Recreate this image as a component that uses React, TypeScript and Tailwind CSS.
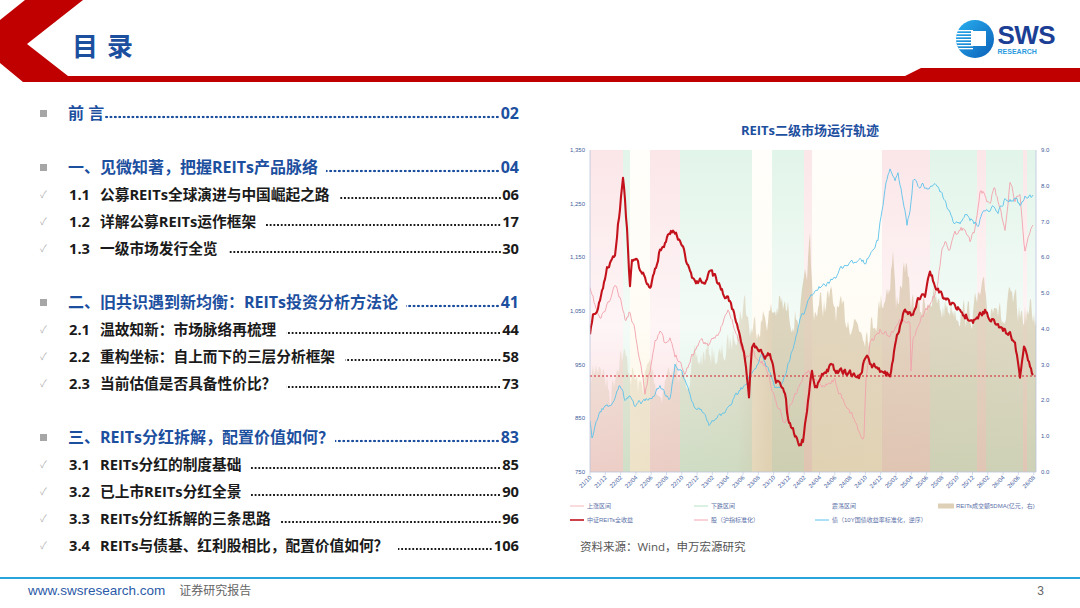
import React from "react";

type Pt = [number, number];

function rng(seed: number) {
  let s = seed;
  return () => {
    s = (s * 16807) % 2147483647;
    return s / 2147483647;
  };
}

// interpolate key points and add a little smoothed noise so lines look like market data
function jag(pts: Pt[], amp: number, seed: number, step = 1) {
  const r = rng(seed);
  const out: string[] = [];
  let n0 = 0;
  for (let i = 0; i < pts.length - 1; i++) {
    const [x0, y0] = pts[i];
    const [x1, y1] = pts[i + 1];
    const n = Math.max(1, Math.round((x1 - x0) / step));
    for (let k = 0; k < n; k++) {
      const t = k / n;
      n0 = n0 * 0.45 + (r() - 0.5) * amp;
      const x = x0 + (x1 - x0) * t;
      const y = y0 + (y1 - y0) * t + n0;
      out.push(`${x.toFixed(1)},${y.toFixed(1)}`);
    }
  }
  const last = pts[pts.length - 1];
  out.push(`${last[0]},${last[1]}`);
  return out.join(" ");
}

const reits: Pt[] = [
  [590, 337], [593, 312], [597, 308], [603, 290], [607, 268], [612, 262], [615, 255], [618, 225],
  [620, 210], [623, 175], [625, 200], [627, 230], [630, 287], [632, 260], [636, 255], [640, 270],
  [645, 275], [650, 290], [654, 275], [660, 250], [665, 245], [670, 232], [675, 232], [680, 240],
  [685, 255], [690, 275], [695, 282], [700, 280], [705, 283], [710, 270], [715, 277], [720, 288],
  [725, 295], [730, 303], [736, 320], [740, 340], [745, 360], [749, 395], [752, 345], [757, 346],
  [765, 355], [770, 355], [776, 380], [785, 390], [788, 420], [795, 434], [798, 445], [803, 440],
  [808, 400], [812, 368], [815, 390], [822, 375], [830, 367], [840, 372], [850, 373], [860, 376],
  [866, 355], [872, 365], [880, 370], [890, 376], [895, 345], [905, 308], [912, 315], [918, 300],
  [925, 295], [930, 272], [935, 285], [945, 300], [955, 305], [965, 315], [975, 322], [985, 310],
  [995, 325], [1003, 330], [1010, 335], [1015, 345], [1020, 375], [1024, 348], [1028, 362], [1033, 375],
];

const stock: Pt[] = [
  [590, 290], [600, 320], [610, 300], [615, 285], [622, 305], [625, 320], [630, 312], [635, 330],
  [640, 360], [645, 392], [650, 370], [655, 340], [660, 330], [665, 345], [670, 340], [675, 355],
  [680, 360], [685, 375], [690, 360], [695, 350], [700, 340], [710, 345], [720, 330], [728, 310],
  [735, 330], [745, 360], [752, 350], [758, 360], [765, 365], [770, 380], [775, 400], [780, 410],
  [785, 425], [790, 405], [800, 385], [806, 370], [812, 375], [820, 385], [835, 380], [842, 400],
  [848, 410], [855, 420], [862, 440], [864, 435], [866, 380], [870, 345], [880, 330], [890, 335],
  [900, 320], [910, 322], [911, 372], [913, 340], [920, 320], [930, 305], [937, 290], [942, 250],
  [945, 240], [950, 250], [955, 235], [960, 230], [965, 228], [970, 240], [975, 230], [980, 190],
  [985, 195], [990, 205], [994, 185], [1000, 210], [1005, 230], [1010, 182], [1015, 200], [1020, 195],
  [1025, 252], [1028, 240], [1033, 225],
];

const bond: Pt[] = [
  [590, 423], [592, 440], [600, 410], [610, 405], [615, 400], [620, 385], [625, 400], [630, 395],
  [635, 405], [645, 400], [655, 395], [660, 385], [665, 395], [670, 400], [675, 363], [680, 370],
  [685, 380], [690, 395], [695, 410], [700, 408], [705, 415], [710, 425], [720, 415], [730, 405],
  [735, 395], [745, 385], [752, 370], [757, 365], [762, 355], [770, 375], [775, 385], [780, 385],
  [785, 375], [795, 340], [800, 320], [805, 310], [810, 298], [820, 287], [830, 282], [838, 273],
  [845, 265], [855, 262], [860, 255], [865, 263], [872, 252], [878, 240], [882, 210], [885, 190],
  [887, 180], [890, 172], [895, 180], [898, 175], [902, 195], [905, 212], [907, 225], [910, 210],
  [913, 180], [918, 185], [923, 185], [928, 188], [935, 182], [940, 190], [945, 200], [950, 215],
  [955, 225], [960, 222], [965, 215], [970, 220], [978, 225], [985, 210], [993, 207], [998, 212],
  [1005, 200], [1010, 200], [1016, 198], [1020, 205], [1025, 198], [1033, 195],
];

const volume: Pt[] = [
  [590, 380], [600, 360], [610, 395], [620, 350], [630, 370], [640, 390], [650, 365], [660, 395],
  [670, 370], [680, 380], [690, 370], [700, 360], [710, 350], [720, 360], [730, 345], [740, 315],
  [745, 300], [750, 330], [760, 320], [770, 315], [780, 305], [790, 315], [800, 315], [805, 290],
  [810, 245], [813, 310], [820, 305], [830, 300], [840, 315], [850, 318], [860, 325], [870, 330],
  [880, 305], [890, 280], [893, 250], [896, 310], [900, 285], [905, 265], [910, 300], [920, 310],
  [930, 295], [940, 310], [950, 305], [960, 310], [970, 315], [980, 300], [985, 295], [990, 315],
  [995, 290], [1000, 315], [1005, 325], [1010, 300], [1020, 315], [1030, 312], [1036, 320],
];

// shaded regimes: p = 上涨, g = 下跌, c = 震荡
const bands: [number, number, string][] = [
  [590, 623, "p"], [623, 630, "g"], [630, 650, "c"], [650, 680, "p"], [680, 752, "g"],
  [752, 772, "c"], [772, 804, "g"], [804, 812, "p"], [812, 882, "c"], [882, 930, "p"],
  [930, 977, "g"], [977, 986, "p"], [986, 1023, "g"], [1023, 1027, "p"], [1027, 1036, "g"],
];

const xLabels = [
  "21/10", "21/12", "22/02", "22/04", "22/06", "22/08", "22/10", "22/12", "23/02", "23/04",
  "23/06", "23/08", "23/10", "23/12", "24/02", "24/04", "24/06", "24/08", "24/10", "24/12",
  "25/02", "25/04", "25/06", "25/08", "25/10", "25/12", "26/02", "26/04", "26/06", "26/08",
];

const leftAxis = ["1,350", "1,250", "1,150", "1,050", "950", "850", "750"];
const rightAxis = ["9.0", "8.0", "7.0", "6.0", "5.0", "4.0", "3.0", "2.0", "1.0", "0.0"];

const volumePts = `${jag(volume, 26, 7, 1)} 1036,472 590,472`;
const stockPts = jag(stock, 5, 11);
const bondPts = jag(bond, 4.5, 23);
const reitsPts = jag(reits, 5.5, 41);

function Chart() {
  const svgFont = "Liberation Sans, Noto Sans CJK SC, sans-serif";
  return (
    <svg width={500} height={391} viewBox="550 139 500 391" fontFamily={svgFont}>
      <defs>
        <linearGradient id="gp" x1="0" y1="0" x2="0" y2="1">
          <stop offset="0" stopColor="#fbe6e8" />
          <stop offset="0.55" stopColor="#fef5f6" />
          <stop offset="1" stopColor="#f9d7db" />
        </linearGradient>
        <linearGradient id="gg" x1="0" y1="0" x2="0" y2="1">
          <stop offset="0" stopColor="#e2f5ea" />
          <stop offset="0.55" stopColor="#f4fbf7" />
          <stop offset="1" stopColor="#d2efdd" />
        </linearGradient>
        <linearGradient id="gc" x1="0" y1="0" x2="0" y2="1">
          <stop offset="0" stopColor="#fffefa" />
          <stop offset="0.55" stopColor="#fffcf5" />
          <stop offset="1" stopColor="#fcf4de" />
        </linearGradient>
        <linearGradient id="gv" gradientUnits="userSpaceOnUse" x1="590" y1="0" x2="1036" y2="0">
          <stop offset="0" stopColor="#c9b48e" stopOpacity={0.25} />
          <stop offset="0.33" stopColor="#c9b48e" stopOpacity={0.35} />
          <stop offset="0.4" stopColor="#c9b48e" stopOpacity={0.55} />
          <stop offset="1" stopColor="#c9b48e" stopOpacity={0.5} />
        </linearGradient>
        <clipPath id="plot">
          <rect x={590} y={150} width={446} height={322} />
        </clipPath>
      </defs>

      {bands.map(([a, b, k]) => (
        <rect key={a} x={a} y={150} width={b - a} height={322} fill={`url(#g${k})`} />
      ))}

      <g clipPath="url(#plot)">
        <polygon points={volumePts} fill="url(#gv)" />
        <polyline points={stockPts} fill="none" stroke="#f2a2ab" strokeWidth={0.9} />
        <polyline points={bondPts} fill="none" stroke="#5cc2ea" strokeWidth={0.9} />
        <polyline points={reitsPts} fill="none" stroke="#c3121c" strokeWidth={2.1} strokeLinejoin="round" />
      </g>

      <line x1={590} y1={376} x2={1036} y2={376} stroke="#d0202a" strokeWidth={1} strokeDasharray="2 2" />

      <line x1={590} y1={150} x2={590} y2={472} stroke="#b8c4dc" strokeWidth={0.8} />
      <line x1={1036} y1={150} x2={1036} y2={472} stroke="#b8c4dc" strokeWidth={0.8} />
      <line x1={590} y1={472} x2={1036} y2={472} stroke="#b8c4dc" strokeWidth={0.8} />

      {leftAxis.map((l, i) => (
        <text key={l} x={585} y={150 + i * 53.67 + 2} fontSize={6} fill="#3f5c9c" textAnchor="end">
          {l}
        </text>
      ))}
      {rightAxis.map((l, i) => (
        <text key={l} x={1041} y={150 + i * 35.78 + 2} fontSize={6} fill="#3f5c9c">
          {l}
        </text>
      ))}
      {xLabels.map((l, i) => {
        const x = 592 + i * 15.3;
        return (
          <g key={l}>
            <line x1={x - 2} y1={472} x2={x - 2} y2={475} stroke="#b8c4dc" strokeWidth={0.6} />
            <text x={x} y={478} fontSize={6} fill="#3f5c9c" textAnchor="end" transform={`rotate(-45 ${x} 478)`}>
              {l}
            </text>
          </g>
        );
      })}

      <g fontSize={6} fill="#5b70a8">
        <line x1={570} y1={506} x2={584} y2={506} stroke="#f5b9bf" strokeWidth={1} />
        <text x={587} y={508}>上涨区间</text>
        <line x1={694} y1={506} x2={708} y2={506} stroke="#b3e4c8" strokeWidth={1} />
        <text x={711} y={508}>下跌区间</text>
        <text x={832} y={508}>震荡区间</text>
        <rect x={938} y={503.5} width={16} height={5} fill="#ddd0b6" />
        <text x={956} y={508}>REITs成交额5DMA(亿元，右)</text>

        <line x1={570} y1={520} x2={584} y2={520} stroke="#c3121c" strokeWidth={1.6} />
        <text x={587} y={522}>中证REITs全收益</text>
        <line x1={694} y1={520} x2={708} y2={520} stroke="#f2a6ae" strokeWidth={1} />
        <text x={711} y={522}>股（沪指标准化）</text>
        <line x1={815} y1={520} x2={829} y2={520} stroke="#5cc2ea" strokeWidth={1} />
        <text x={832} y={522}>债（10Y国债收益率标准化，逆序）</text>
      </g>
    </svg>
  );
}

function Logo() {
  return (
    <div className="flex items-center gap-[3px] pt-[19px] pr-[25px]">
      <svg width={40} height={40} viewBox="0 0 40 40">
        <defs>
          <linearGradient id="lg" x1="0" y1="0" x2="1" y2="1">
            <stop offset="0" stopColor="#29b0ef" />
            <stop offset="1" stopColor="#0b5fb8" />
          </linearGradient>
          <clipPath id="lc">
            <circle cx={20} cy={20} r={19} />
          </clipPath>
        </defs>
        <circle cx={20} cy={20} r={19} fill="url(#lg)" />
        <g clipPath="url(#lc)" fill="#ffffff">
          {[11, 14, 17, 20, 23, 26, 29].map((y) => (
            <rect key={y} x={0} y={y} width={18} height={1.3} />
          ))}
        </g>
        <rect x={16} y={12} width={15} height={15} fill="#ffffff" />
      </svg>
      <div className="flex flex-col font-['Liberation_Sans',sans-serif] font-bold">
        <span className="text-[26px] leading-[25px] tracking-[-0.6px] text-[#1c3f95]">SWS</span>
        <span className="text-[7px] leading-[8px] text-[#2b9be0]">RESEARCH</span>
      </div>
    </div>
  );
}

type Sub = [string, string, string];
type Section = { title: string; page: string; gap: boolean; subs: Sub[] };

const sections: Section[] = [
  { title: "前 言", page: "02", gap: false, subs: [] },
  {
    title: "一、见微知著，把握REITs产品脉络",
    page: "04",
    gap: true,
    subs: [
      ["1.1", "公募REITs全球演进与中国崛起之路", "06"],
      ["1.2", "详解公募REITs运作框架", "17"],
      ["1.3", "一级市场发行全览", "30"],
    ],
  },
  {
    title: "二、旧共识遇到新均衡：REITs投资分析方法论",
    page: "41",
    gap: true,
    subs: [
      ["2.1", "温故知新：市场脉络再梳理", "44"],
      ["2.2", "重构坐标：自上而下的三层分析框架", "58"],
      ["2.3", "当前估值是否具备性价比？", "73"],
    ],
  },
  {
    title: "三、REITs分红拆解，配置价值如何？",
    page: "83",
    gap: false,
    subs: [
      ["3.1", "REITs分红的制度基础", "85"],
      ["3.2", "已上市REITs分红全景", "90"],
      ["3.3", "REITs分红拆解的三条思路", "96"],
      ["3.4", "REITs与债基、红利股相比，配置价值如何？", "106"],
    ],
  },
];

function Toc() {
  return (
    <div className="flex w-[540px] flex-col gap-[26px] pl-[40px] pr-[21px] pt-[17px]">
      {sections.map((s) => (
        <div key={s.page} className="flex flex-col">
          <div className="flex h-[28px] items-center text-[16px] font-bold text-[#1d4f9f]">
            <span className="mr-[21px] h-[7px] w-[7px] shrink-0 bg-[#a6a6a6]" />
            <span className="whitespace-nowrap">{s.title}</span>
            <span
              className={`mt-[8px] h-[4px] min-w-0 flex-1 bg-[radial-gradient(circle,#1d4f9f_1.15px,transparent_1.55px)] bg-[length:4.4px_4px] bg-right bg-repeat-x ${s.gap ? "ml-[8px]" : "ml-[1px]"}`}
            />
            <span className="pl-[1px]">{s.page}</span>
          </div>
          {s.subs.map(([n, t, p]) => (
            <div key={n} className="flex h-[27px] items-center text-[14.7px] font-bold text-[#1a1a1a]">
              <span className="w-[29px] shrink-0 text-[10px] font-normal text-[#b5b5b5]">✓</span>
              <span className="w-[31px] shrink-0">{n}</span>
              <span className="whitespace-nowrap">{t}</span>
              <span className="ml-[10px] mt-[6px] h-[4px] min-w-0 flex-1 bg-[radial-gradient(circle,#1a1a1a_1.05px,transparent_1.45px)] bg-[length:3.7px_4px] bg-right bg-repeat-x" />
              <span className="pl-[1px]">{p}</span>
            </div>
          ))}
        </div>
      ))}
    </div>
  );
}

export default function App() {
  return (
    <div className="flex h-[608px] w-[1080px] flex-col overflow-hidden bg-white font-['Open_Sans','Noto_Sans_CJK_SC',sans-serif]">
      <header className="relative h-[82px] shrink-0">
        <svg className="absolute inset-0" width={1080} height={82} viewBox="0 0 1080 82">
          <polygon
            points="25,0 83,0 27,44 68,76 905,76 921,68 1080,68 1080,82 23,82 0,63 0,20"
            fill="#c00000"
          />
        </svg>
        <div className="relative flex h-full items-start justify-between">
          <h1 className="flex gap-[9px] pl-[72px] pt-[32px] font-['Noto_Sans_CJK_SC',sans-serif] text-[26px] font-bold leading-none text-[#1d4f9f]">
            <span>目</span>
            <span>录</span>
          </h1>
          <Logo />
        </div>
      </header>

      <main className="flex h-[495px] shrink-0">
        <Toc />
        <section className="flex flex-1 flex-col pl-[10px] pt-[39px]">
          <h2 className="h-[18px] pr-[10px] text-center text-[13px] font-bold leading-[18px] text-[#1d4f9f]">
            REITs二级市场运行轨迹
          </h2>
          <Chart />
          <p className="mt-[9px] pl-[30px] text-[11.5px] leading-[16px] text-[#555555]">
            资料来源：Wind，申万宏源研究
          </p>
        </section>
      </main>

      <footer className="flex flex-1 items-start border-t-2 border-[#27a4dd] pt-[4px] leading-[16px]">
        <span className="pl-[28px] font-['Liberation_Sans',sans-serif] text-[13.5px] text-[#2b5aa8]">
          www.swsresearch.com
        </span>
        <span className="pl-[14px] text-[12px] text-[#666666]">证券研究报告</span>
        <span className="ml-auto pr-[36px] font-['Liberation_Sans',sans-serif] text-[12px] text-[#666666]">3</span>
      </footer>
    </div>
  );
}
